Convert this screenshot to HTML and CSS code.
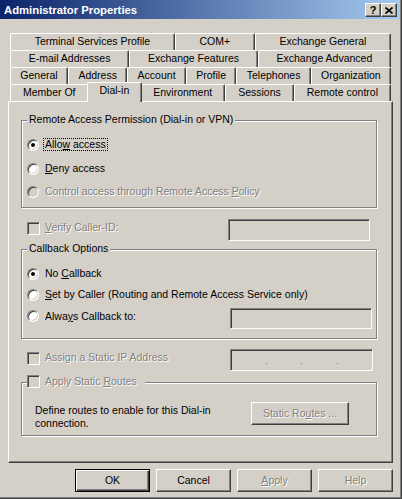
FILE: index.html
```html
<!DOCTYPE html>
<html>

<head>
    <title>Administrator Properties</title>
    <link rel="stylesheet" href="styles.css">
</head>

<body>

    <div class="window">
        <div class="titlebar">
            <span class="title">Administrator Properties</span>
            <span class="cap-btn">?</span>
            <span class="cap-btn">
                <svg width="8" height="7" viewBox="0 0 8 7">
                    <path d="M0.5 0.5 L7.5 6.5 M7.5 0.5 L0.5 6.5" stroke="#000" stroke-width="1.6" fill="none" />
                </svg>
            </span>
        </div>

        <div class="dialog">
            <div class="tabs">
                <div class="tab-row">
                    <div class="tab">Terminal Services Profile</div>
                    <div class="tab">COM+</div>
                    <div class="tab">Exchange General</div>
                </div>
                <div class="tab-row">
                    <div class="tab">E-mail Addresses</div>
                    <div class="tab">Exchange Features</div>
                    <div class="tab">Exchange Advanced</div>
                </div>
                <div class="tab-row">
                    <div class="tab">General</div>
                    <div class="tab">Address</div>
                    <div class="tab">Account</div>
                    <div class="tab">Profile</div>
                    <div class="tab">Telephones</div>
                    <div class="tab">Organization</div>
                </div>
                <div class="tab-row">
                    <div class="tab">Member Of</div>
                    <div class="tab active">Dial-in</div>
                    <div class="tab">Environment</div>
                    <div class="tab">Sessions</div>
                    <div class="tab">Remote control</div>
                </div>
            </div>

            <div class="panel">
                <!-- remote access permission -->
                <div class="group perm">
                    <div class="group-title">Remote Access Permission (Dial-in or VPN)</div>
                    <div class="opt first">
                        <span class="radio checked"></span>
                        <span class="label focus">Allo<u>w</u> access</span>
                    </div>
                    <div class="opt deny">
                        <span class="radio"></span>
                        <span class="label"><u>D</u>eny access</span>
                    </div>
                    <div class="opt policy">
                        <span class="radio off"></span>
                        <span class="label off">Control access through Remote Access <u>P</u>olicy</span>
                    </div>
                </div>

                <div class="field-row verify">
                    <span class="check"></span>
                    <span class="label off"><u>V</u>erify Caller-ID:</span>
                    <span class="textbox"></span>
                </div>

                <!-- callback -->
                <div class="group callback">
                    <div class="group-title">Callback Options</div>
                    <div class="opt first">
                        <span class="radio checked"></span>
                        <span class="label">No <u>C</u>allback</span>
                    </div>
                    <div class="opt caller">
                        <span class="radio"></span>
                        <span class="label"><u>S</u>et by Caller (Routing and Remote Access Service only)</span>
                    </div>
                    <div class="opt always">
                        <span class="radio"></span>
                        <span class="label">Alwa<u>y</u>s Callback to:</span>
                        <span class="textbox"></span>
                    </div>
                </div>

                <div class="field-row static-ip">
                    <span class="check"></span>
                    <span class="label off">Assi<u>g</u>n a Static IP Address</span>
                    <span class="textbox ip">
                        <span class="dot"></span>
                        <span class="dot"></span>
                        <span class="dot"></span>
                    </span>
                </div>

                <!-- static routes -->
                <div class="group routes">
                    <div class="group-title with-check">
                        <span class="check"></span>
                        <span class="off">Apply Static <u>R</u>outes</span>
                    </div>
                    <div class="routes-body">
                        <div class="routes-text">Define routes to enable for this Dial-in connection.</div>
                        <span class="btn static off">Static Ro<u>u</u>tes ...</span>
                    </div>
                </div>
            </div>

            <div class="buttons">
                <span class="btn default">OK</span>
                <span class="btn">Cancel</span>
                <span class="btn off"><u>A</u>pply</span>
                <span class="btn off">Help</span>
            </div>
        </div>
    </div>

</body>

</html>
```

FILE: styles.css
```css
body {
    margin: 0;
    background-color: #d4d0c8;
    font-family: "Liberation Sans", Arial, sans-serif;
    font-size: 10.5px;
    line-height: 13px;
    color: #000;
}

.window {
    width: 402px;
    height: 499px;
    box-sizing: border-box;
    background-color: #d4d0c8;
    border-right: 1px solid #404040;
    border-bottom: 1px solid #404040;
    box-shadow: inset -1px -1px #808080;
}

/* caption */
.titlebar {
    display: flex;
    align-items: flex-start;
    height: 19px;
    margin-right: 1px;
    padding-right: 3px;
    background: linear-gradient(to right, #0a246a, #a6caf0);
}

.title {
    flex: 1;
    padding-left: 4px;
    color: white;
    font-weight: bold;
    font-size: 11.3px;
    line-height: 20px;
}

.cap-btn {
    display: flex;
    align-items: center;
    justify-content: center;
    width: 16px;
    height: 14px;
    margin-top: 3px;
    box-sizing: border-box;
    background-color: #d4d0c8;
    border: 1px solid;
    border-color: #fff #404040 #404040 #fff;
    box-shadow: inset -1px -1px #808080;
    font-weight: bold;
    font-size: 11px;
    line-height: 12px;
}

.dialog {
    padding: 14px 8px 0 8px;
}

/* tab strip */
.tabs {
    margin: 0 2px;
}

.tab-row {
    display: flex;
    height: 17px;
}

.tab {
    flex: 1 1 auto;
    box-sizing: border-box;
    padding: 0 2px;
    border: 1px solid;
    border-bottom: 0;
    border-color: #fff #404040 #fff #fff;
    border-radius: 2px 2px 0 0;
    box-shadow: inset -1px 0 #808080;
    background-color: #d4d0c8;
    text-align: center;
    white-space: nowrap;
    line-height: 15px;
}

.tab.active {
    position: relative;
    z-index: 1;
    margin: -2px -2px -1px;
}

.panel {
    border: 1px solid;
    border-color: #fff #404040 #404040 #fff;
    box-shadow: inset -1px -1px #808080;
    padding: 18px 15px 26px 12px;
}

/* etched group boxes */
.group {
    border: 1px solid #808080;
    box-shadow: inset 1px 1px #fff, 1px 1px #fff;
    padding-bottom: 10px;
}

.group-title {
    width: fit-content;
    margin: -8px 0 0 5px;
    padding: 0 2px;
    background-color: #d4d0c8;
}

.group-title.with-check {
    display: flex;
    align-items: center;
    gap: 5px;
    padding: 0 8px 0 0;
}

.opt {
    display: flex;
    align-items: center;
    height: 13px;
    padding-left: 5px;
    margin-top: 11px;
}

.opt.first {
    margin-top: 12px;
}

.opt.policy {
    margin-top: 10px;
}

.perm {
    padding-bottom: 9px;
}

.callback .opt.caller {
    margin-top: 8px;
}

.callback .opt.always {
    align-items: flex-start;
    height: 21px;
    margin-top: 7px;
}

.callback .opt.always .radio,
.callback .opt.always .label {
    margin-top: 2px;
}

.callback {
    margin-top: 8px;
    padding-bottom: 9px;
}

.label {
    margin-left: 6px;
    white-space: nowrap;
}

.label.focus {
    margin-left: 4px;
    padding: 0 1px;
    border: 1px dotted #000;
    line-height: 11px;
}

.off {
    color: #808080;
    text-shadow: 1px 1px #fff;
}

.radio {
    display: flex;
    align-items: center;
    justify-content: center;
    flex: none;
    width: 12px;
    height: 12px;
    box-sizing: border-box;
    border: 1px solid;
    border-color: #808080 #fff #fff #808080;
    border-radius: 50%;
    box-shadow: inset 1px 1px #404040, inset -1px -1px #d4d0c8;
    background-color: #fff;
}

.radio.off {
    background-color: #d4d0c8;
}

.radio.checked::after {
    content: "";
    width: 4px;
    height: 4px;
    border-radius: 50%;
    background-color: #000;
}

.check {
    flex: none;
    width: 13px;
    height: 13px;
    box-sizing: border-box;
    border: 1px solid;
    border-color: #808080 #fff #fff #808080;
    box-shadow: inset 1px 1px #404040, inset -1px -1px #d4d0c8;
    background-color: #d4d0c8;
}

.field-row {
    display: flex;
    align-items: flex-start;
    height: 22px;
    padding-left: 6px;
}

.field-row .check {
    margin-top: 3px;
}

.field-row .label {
    margin-left: 5px;
    margin-top: 2px;
}

.verify {
    margin-top: 11px;
}

.static-ip {
    margin-top: 10px;
}

.textbox {
    display: flex;
    align-items: center;
    justify-content: space-evenly;
    flex: none;
    width: 142px;
    height: 22px;
    margin-left: auto;
    box-sizing: border-box;
    border: 1px solid;
    border-color: #808080 #fff #fff #808080;
    box-shadow: inset 1px 1px #404040, inset -1px -1px #d4d0c8;
    background-color: #d4d0c8;
}

.verify .textbox {
    margin-right: 7px;
}

.always .textbox {
    height: 21px;
    margin-right: 4px;
}

.textbox.ip {
    width: 143px;
    margin-right: 4px;
}

.dot {
    width: 1px;
    height: 1px;
    margin-top: 6px;
    background-color: #808080;
}

.routes {
    margin-top: 11px;
    padding-bottom: 5px;
}

.routes-body {
    display: flex;
    align-items: flex-start;
    margin-top: 14px;
    padding: 0 27px 0 13px;
}

.routes-text {
    width: 195px;
    margin-top: 2px;
}

/* push buttons */
.btn {
    display: flex;
    align-items: center;
    justify-content: center;
    width: 75px;
    height: 23px;
    box-sizing: border-box;
    border: 1px solid;
    border-color: #fff #404040 #404040 #fff;
    box-shadow: inset -1px -1px #808080;
    background-color: #d4d0c8;
}

.btn.default {
    border-color: #000;
    box-shadow: inset 1px 1px #fff, inset -1px -1px #404040, inset -2px -2px #808080;
}

.btn.static {
    width: 98px;
    margin-left: auto;
}

.buttons {
    display: flex;
    justify-content: flex-end;
    gap: 6px;
    margin-top: 6px;
}
```
